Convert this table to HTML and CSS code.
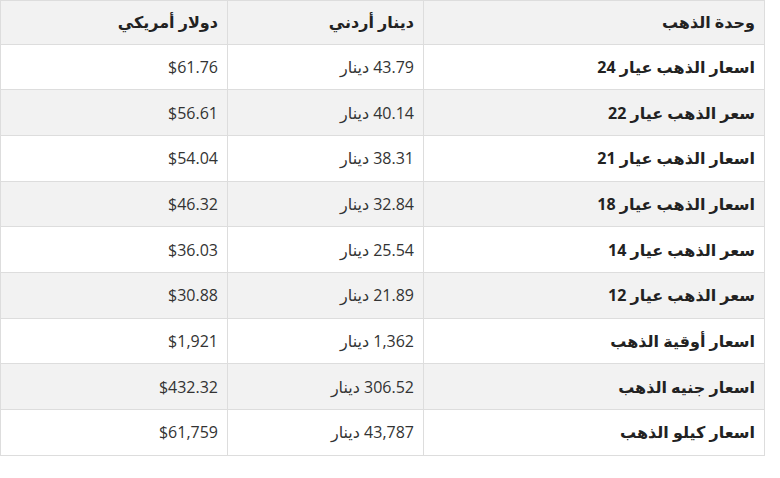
FILE: index.html
```html
<!DOCTYPE html>
<html lang="ar" dir="rtl">
<head>
<meta charset="utf-8">
<link rel="stylesheet" href="styles.css">
</head>
<body>
<table class="prices">
  <thead>
    <tr><th class="c-unit">وحدة الذهب</th><th class="c-jod">دينار أردني</th><th class="c-usd">دولار أمريكي</th></tr>
  </thead>
  <tbody>
    <tr><td class="unit">اسعار الذهب عيار 24</td><td>43.79 دينار</td><td>$61.76</td></tr>
    <tr><td class="unit">سعر الذهب عيار 22</td><td>40.14 دينار</td><td>$56.61</td></tr>
    <tr><td class="unit">اسعار الذهب عيار 21</td><td>38.31 دينار</td><td>$54.04</td></tr>
    <tr><td class="unit">اسعار الذهب عيار 18</td><td>32.84 دينار</td><td>$46.32</td></tr>
    <tr><td class="unit">سعر الذهب عيار 14</td><td>25.54 دينار</td><td>$36.03</td></tr>
    <tr><td class="unit">سعر الذهب عيار 12</td><td>21.89 دينار</td><td>$30.88</td></tr>
    <tr><td class="unit">اسعار أوقية الذهب</td><td>1,362 دينار</td><td>$1,921</td></tr>
    <tr><td class="unit">اسعار جنيه الذهب</td><td>306.52 دينار</td><td>$432.32</td></tr>
    <tr><td class="unit">اسعار كيلو الذهب</td><td>43,787 دينار</td><td>$61,759</td></tr>
  </tbody>
</table>
</body>
</html>
```
FILE: styles.css
```css
html, body {
  margin: 0;
  padding: 0;
  background: #fff;
}
body {
  font-family: "Open Sans", "DejaVu Sans", sans-serif;
  font-size: 16px;
  color: #333;
}
.prices {
  direction: rtl;
  border-collapse: collapse;
  width: 764px;
  margin-right: 15px;
  table-layout: fixed;
}
.prices th, .prices td {
  box-sizing: border-box;
  border: 1px solid #ddd;
  padding: 0 9px;
  text-align: right;
  vertical-align: middle;
}
.prices th {
  background: #f2f2f2;
  height: 43.5px;
  font-weight: bold;
  color: #222;
}
.prices .c-unit { width: 341px; }
.prices .c-jod { width: 196px; }
.prices .c-usd { width: 227px; }
.prices td { height: 45.7px; }
.prices tbody tr:nth-child(even) td { background: #f2f2f2; }
.prices td.unit { font-weight: bold; color: #222; }
```
